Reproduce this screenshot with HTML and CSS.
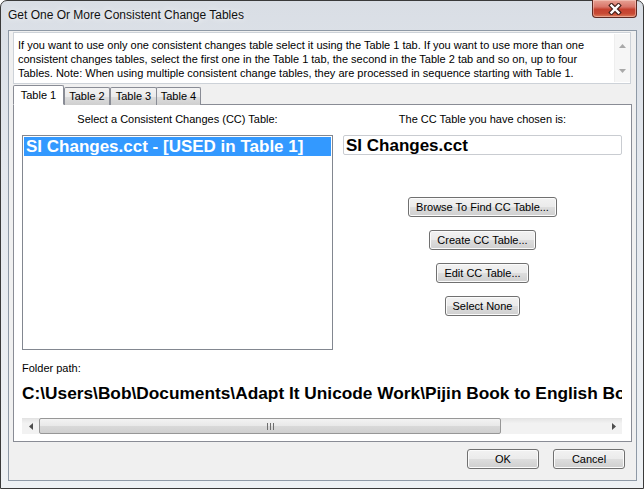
FILE: index.html
```html
<!DOCTYPE html>
<html>
<head>
<meta charset="utf-8">
<title>Get One Or More Consistent Change Tables</title>
<link rel="stylesheet" href="styles.css">
</head>
<body>
<div class="window">
  <div class="titlebar">
    <div class="title">Get One Or More Consistent Change Tables</div>
    <div class="close">
      <svg width="14" height="12" viewBox="0 0 14 12">
        <path d="M3.5 2.5 L10.5 9.5 M10.5 2.5 L3.5 9.5" stroke="#47221c" stroke-width="4.6" stroke-linecap="square"/>
        <path d="M3.5 2.5 L10.5 9.5 M10.5 2.5 L3.5 9.5" stroke="#ffffff" stroke-width="2.4" stroke-linecap="square"/>
      </svg>
    </div>
  </div>
  <div class="client">
    <div class="desc">
      <div class="desc-text">
        <div class="line">If you want to use only one consistent changes table select it using the Table 1 tab. If you want to use more than one</div>
        <div class="line">consistent changes tables, select the first one in the Table 1 tab, the second in the Table 2 tab and so on, up to four</div>
        <div class="line">Tables. Note: When using multiple consistent change tables, they are processed in sequence starting with Table 1.</div>
      </div>
      <div class="vscroll">
        <svg width="7" height="4" viewBox="0 0 7 4"><path d="M0 4 L3.5 0 L7 4 Z" fill="#a9a9a9"/></svg>
        <svg width="7" height="4" viewBox="0 0 7 4"><path d="M0 0 L3.5 4 L7 0 Z" fill="#a9a9a9"/></svg>
      </div>
    </div>

    <div class="tabs">
      <div class="tab active">Table 1</div>
      <div class="tab t2">Table 2</div>
      <div class="tab t3">Table 3</div>
      <div class="tab t4">Table 4</div>
    </div>

    <div class="panel">
      <div class="cols">
        <div class="col-left">
          <div class="label">Select a Consistent Changes (CC) Table:</div>
          <div class="listbox">
            <div class="item selected">SI Changes.cct - [USED in Table 1]</div>
          </div>
        </div>
        <div class="col-right">
          <div class="label">The CC Table you have chosen is:</div>
          <div class="field">SI Changes.cct</div>
          <div class="actions">
            <button class="btn">Browse To Find CC Table...</button>
            <button class="btn">Create CC Table...</button>
            <button class="btn">Edit CC Table...</button>
            <button class="btn">Select None</button>
          </div>
        </div>
      </div>
      <div class="folder-label">Folder path:</div>
      <div class="path">C:\Users\Bob\Documents\Adapt It Unicode Work\Pijin Book to English Book</div>
      <div class="hscroll">
        <div class="harrow">
          <svg width="4" height="7" viewBox="0 0 4 7"><path d="M4 0 L0 3.5 L4 7 Z" fill="#4d4d4d"/></svg>
        </div>
        <div class="thumb">
          <svg width="7" height="7" viewBox="0 0 7 7"><path d="M0.5 0 V7 M3.5 0 V7 M6.5 0 V7" stroke="#6e6e6e" stroke-width="1"/></svg>
        </div>
        <div class="track"></div>
        <div class="harrow">
          <svg width="4" height="7" viewBox="0 0 4 7"><path d="M0 0 L4 3.5 L0 7 Z" fill="#4d4d4d"/></svg>
        </div>
      </div>
    </div>

    <div class="footer">
      <button class="btn dlg">OK</button>
      <button class="btn dlg">Cancel</button>
    </div>
  </div>
</div>
</body>
</html>
```

FILE: styles.css
```css
html, body {
  margin: 0;
  padding: 0;
}
body {
  width: 644px;
  height: 489px;
  overflow: hidden;
  background: #ffffff;
  font-family: "Liberation Sans", Arial, sans-serif;
  font-size: 11px;
  color: #000;
}

.window {
  width: 644px;
  height: 489px;
  box-sizing: border-box;
  border: 1px solid #3a3a3a;
  border-radius: 7px 7px 0 0;
  background: linear-gradient(180deg, #d9dee5 0%, #e4e8ee 35%, #eef1f4 100%);
  display: flex;
  flex-direction: column;
  padding: 0 6px 7px 7px;
}

.titlebar {
  height: 29px;
  display: flex;
  align-items: flex-start;
}
.title {
  flex: 1;
  padding-top: 7px;
  font-size: 12px;
  line-height: 15px;
  color: #111;
  text-shadow: 0 0 6px #fff;
}
.close {
  width: 45px;
  height: 18px;
  box-sizing: border-box;
  margin-top: -1px;
  border: 1px solid #5e2a23;
  border-top: none;
  border-radius: 0 0 4px 4px;
  background: linear-gradient(180deg, #e7a294 0%, #d9766a 40%, #c5412f 55%, #c84a34 80%, #dc7d5c 100%);
  box-shadow: inset 0 0 0 1px rgba(255, 220, 210, 0.45);
  display: flex;
  align-items: center;
  justify-content: center;
}

.client {
  flex: 1;
  background: #f0f0f0;
  border: 1px solid #8e99a6;
  display: flex;
  flex-direction: column;
  padding: 0;
}

.desc {
  margin: 1px 5px 0 4px;
  height: 52px;
  box-sizing: border-box;
  border: 1px solid #cdd2d8;
  background: #fff;
  display: flex;
}
.desc-text {
  flex: 1;
  padding: 5px 0 0 4px;
  line-height: 14px;
  white-space: nowrap;
  overflow: hidden;
}
.vscroll {
  width: 16px;
  margin: 1px 0;
  background: #f6f6f6;
  border-left: 1px solid #eeeeee;
  display: flex;
  flex-direction: column;
  align-items: center;
  justify-content: space-between;
  padding: 10px 0 9px;
  box-sizing: border-box;
}

.tabs {
  margin: 1px 0 -1px 4px;
  height: 20px;
  display: flex;
  align-items: flex-end;
  position: relative;
  z-index: 1;
}
.tab {
  height: 18px;
  box-sizing: border-box;
  border: 1px solid #898c95;
  border-bottom: none;
  border-radius: 2px 2px 0 0;
  background: linear-gradient(180deg, #f3f3f3 0%, #ebebeb 50%, #dddddd 51%, #cfcfcf 100%);
  line-height: 17px;
  text-align: center;
}
.tab.active {
  height: 20px;
  width: 51px;
  background: #fff;
  line-height: 19px;
  padding-bottom: 2px;
  border-bottom: 1px solid #fff;
}
.tab.t2 { width: 46px; }
.tab.t3 { width: 47px; margin-left: 0; }
.tab.t4 { width: 45px; margin-left: -1px; }

.panel {
  flex: 1;
  margin: 0 4px 0 4px;
  border: 1px solid #898c95;
  background: #fff;
  padding: 7px 8px 7px 8px;
  display: flex;
  flex-direction: column;
}

.cols {
  display: flex;
  gap: 10px;
}
.col-left {
  width: 311px;
  display: flex;
  flex-direction: column;
}
.col-right {
  width: 279px;
  display: flex;
  flex-direction: column;
}
.label {
  line-height: 14px;
  text-align: center;
  margin-bottom: 9px;
}
.listbox {
  height: 215px;
  box-sizing: border-box;
  border: 1px solid #828790;
  padding: 1px;
}
.item {
  height: 19px;
  line-height: 19px;
  padding-left: 2px;
  font-size: 17px;
  font-weight: bold;
  white-space: nowrap;
  overflow: hidden;
}
.item.selected {
  background: #3399ff;
  color: #fff;
}
.field {
  height: 20px;
  box-sizing: border-box;
  border: 1px solid #c9ccd1;
  border-radius: 2px;
  padding-left: 2px;
  font-size: 17px;
  font-weight: bold;
  line-height: 19px;
  overflow: hidden;
  white-space: nowrap;
}
.actions {
  margin-top: 42px;
  display: flex;
  flex-direction: column;
  align-items: center;
  gap: 13px;
}

.btn {
  height: 20px;
  box-sizing: border-box;
  border: 1px solid #707070;
  border-radius: 3px;
  background: linear-gradient(180deg, #f2f2f2 0%, #ebebeb 48%, #dddddd 52%, #cfcfcf 100%);
  box-shadow: inset 0 0 0 1px #fbfbfb;
  font-family: "Liberation Sans", Arial, sans-serif;
  font-size: 11px;
  color: #000;
  padding: 0 7px;
  margin: 0;
  line-height: 17px;
}
.btn.dlg {
  width: 72px;
  padding: 0;
}

.folder-label {
  margin-top: 11px;
  line-height: 14px;
}
.path {
  margin-top: 8px;
  height: 20px;
  line-height: 20px;
  font-size: 17.3px;
  font-weight: bold;
  white-space: nowrap;
  overflow: hidden;
  width: 600px;
}
.hscroll {
  margin-top: 15px;
  width: 600px;
  height: 16px;
  display: flex;
  background: linear-gradient(180deg, #e6e6e6 0%, #f2f2f2 30%, #f2f2f2 100%);
  border-top: 1px solid #e3e3e3;
  box-sizing: border-box;
}
.harrow {
  width: 17px;
  display: flex;
  align-items: center;
  justify-content: center;
}
.thumb {
  width: 462px;
  box-sizing: border-box;
  border: 1px solid #979797;
  border-radius: 2px;
  background: linear-gradient(180deg, #f3f3f3 0%, #e8e8e8 50%, #d9d9d9 51%, #d0d0d0 100%);
  display: flex;
  align-items: center;
  justify-content: center;
  margin-top: -1px;
  height: 16px;
}
.track {
  flex: 1;
}

.footer {
  display: flex;
  justify-content: flex-end;
  gap: 14px;
  padding: 7px 11px 11px 0;
}
```
